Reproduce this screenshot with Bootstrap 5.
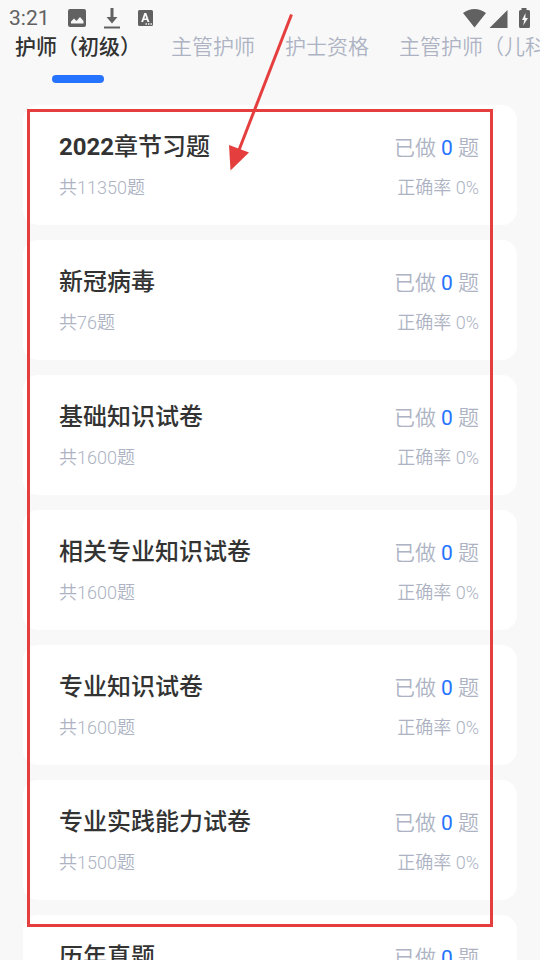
<!DOCTYPE html>
<html lang="zh-CN">
<head>
<meta charset="utf-8">
<meta name="viewport" content="width=device-width, initial-scale=1">
<title>护师题库</title>
<link href="https://cdn.jsdelivr.net/npm/bootstrap@5.3.0/dist/css/bootstrap.min.css" rel="stylesheet">
<style>
  body { background: #f8f8f8; color: #333; font-family: Roboto, "Noto Sans CJK SC", sans-serif; }
  .status-bar { height: 34px; padding: 2px 9px 0; color: #616161; font-size: 21px; line-height: 34px; }
  .status-bar svg { display: block; fill: #616161; }
  .status-left { gap: 18px; }
  .exam-tabs { gap: 30px; padding: 0 15px; height: 71px; }
  .exam-tabs .tab-btn { padding: 0; border: 0; background: none; color: #adb3c3; font-size: 21px; line-height: 26px; font-weight: 350; }
  .exam-tabs .tab-btn.active { color: #333; font-weight: 500; }
  .tab-btn.active::after { content: ""; display: block; width: 52px; height: 8px; margin: 15px auto 0; border-radius: 4px; background: #2673ff; }
  .paper-list { gap: 15px; padding: 0 23px; }
  .paper { height: 120px; padding: 24px 38px 0 36px; border: 0; border-radius: 15px; background: #fff; color: #adb3c3; font-weight: 350; }
  .paper:hover { color: #adb3c3; }
  .paper-title { margin: 0; color: #333; font-size: 24px; line-height: 36px; font-weight: 500; }
  .done { font-size: 21px; line-height: 36px; padding-top: 1px; }
  .done b { color: #2673ff; font-weight: 400; }
  .sub { font-size: 18px; line-height: 24px; padding-top: 11px; }
  .right .sub { padding-top: 10px; }
  .frame { top: 109px; left: 27px; right: 47px; height: 818px; border: 3px solid #e53e3e; }
  .arrow { top: 12px; left: 226px; }
</style>
</head>
<body>
<div class="vh-100 overflow-hidden d-flex flex-column position-relative">
  <header class="status-bar d-flex justify-content-between align-items-center flex-shrink-0">
    <div class="status-left d-flex align-items-center">
      <span>3:21</span>
      <svg width="18" height="18" viewBox="0 0 18 18" aria-hidden="true"><path fill-rule="evenodd" d="M2 0h14a2 2 0 0 1 2 2v14a2 2 0 0 1-2 2H2a2 2 0 0 1-2-2V2a2 2 0 0 1 2-2zM3 14.500h12.500v-2.500L12 8l-3.500 4L6 9.500l-3 3z"/></svg>
      <svg width="16" height="21" viewBox="0 0 16 21" aria-hidden="true"><path d="M6.500 0h3v9h4L8 15.500 2.500 9h4zM0 18.500h16v2H0z"/></svg>
      <svg width="15" height="17" viewBox="0 0 15 17" aria-hidden="true"><path fill-rule="evenodd" d="M1.500 0h12A1.500 1.500 0 0 1 15 1.500v13a1.500 1.500 0 0 1-1.500 1.500h-12A1.500 1.500 0 0 1 0 14.500v-13A1.500 1.500 0 0 1 1.500 0zM6.300 3L3.200 12h2l.6-1.900h3l.6 1.900h2L8.300 3zM7.300 5.400l.9 3.100H6.400zM7.500 13.300v1.400h1.400v-1.400zm2.500 0v1.400h1.400v-1.400zm2.500 0v1.400h1.400v-1.400z"/></svg>
    </div>
    <div class="d-flex align-items-center">
      <svg width="68" height="20" viewBox="0 0 68 20" aria-hidden="true"><path d="M0 5Q11.500-3 23 5L11.500 19.500zM44.500 2v18h-18zM58.500 0h5v2h2a1.500 1.500 0 0 1 1.500 1.500v15a1.500 1.500 0 0 1-1.500 1.500h-8a1.500 1.500 0 0 1-1.500-1.500v-15A1.500 1.500 0 0 1 57.500 2h1z"/><path fill="#f8f8f8" d="M62.500 5l-3.500 7h2.200l-1 5.500 4.800-7.500h-2.600z"/></svg>
    </div>
  </header>
  <nav class="exam-tabs d-flex align-items-start overflow-hidden flex-shrink-0 text-nowrap" aria-label="考试类别">
    <button type="button" class="tab-btn flex-shrink-0 active">护师（初级）</button>
    <button type="button" class="tab-btn flex-shrink-0">主管护师</button>
    <button type="button" class="tab-btn flex-shrink-0">护士资格</button>
    <button type="button" class="tab-btn flex-shrink-0">主管护师（儿科）</button>
  </nav>
  <main class="paper-list d-flex flex-column">
    <a href="#" class="paper flex-shrink-0 d-flex justify-content-between text-decoration-none"><div><h2 class="paper-title"><span class="fw-bold">2022</span>章节习题</h2><div class="sub">共11350题</div></div><div class="right text-end"><div class="done">已做 <b>0</b> 题</div><div class="sub">正确率 0%</div></div></a>
    <a href="#" class="paper flex-shrink-0 d-flex justify-content-between text-decoration-none"><div><h2 class="paper-title">新冠病毒</h2><div class="sub">共76题</div></div><div class="right text-end"><div class="done">已做 <b>0</b> 题</div><div class="sub">正确率 0%</div></div></a>
    <a href="#" class="paper flex-shrink-0 d-flex justify-content-between text-decoration-none"><div><h2 class="paper-title">基础知识试卷</h2><div class="sub">共1600题</div></div><div class="right text-end"><div class="done">已做 <b>0</b> 题</div><div class="sub">正确率 0%</div></div></a>
    <a href="#" class="paper flex-shrink-0 d-flex justify-content-between text-decoration-none"><div><h2 class="paper-title">相关专业知识试卷</h2><div class="sub">共1600题</div></div><div class="right text-end"><div class="done">已做 <b>0</b> 题</div><div class="sub">正确率 0%</div></div></a>
    <a href="#" class="paper flex-shrink-0 d-flex justify-content-between text-decoration-none"><div><h2 class="paper-title">专业知识试卷</h2><div class="sub">共1600题</div></div><div class="right text-end"><div class="done">已做 <b>0</b> 题</div><div class="sub">正确率 0%</div></div></a>
    <a href="#" class="paper flex-shrink-0 d-flex justify-content-between text-decoration-none"><div><h2 class="paper-title">专业实践能力试卷</h2><div class="sub">共1500题</div></div><div class="right text-end"><div class="done">已做 <b>0</b> 题</div><div class="sub">正确率 0%</div></div></a>
    <a href="#" class="paper flex-shrink-0 d-flex justify-content-between text-decoration-none"><div><h2 class="paper-title">历年真题</h2></div><div class="right text-end"><div class="done">已做 <b>0</b> 题</div></div></a>
  </main>
  <div class="frame position-absolute pe-none" aria-hidden="true"></div>
  <svg class="arrow position-absolute pe-none" width="70" height="162" viewBox="226 12 70 162" aria-hidden="true"><path d="M291.500 14.500L239 150" stroke="#e53e3e" stroke-width="3" fill="none"/><path d="M229 145l20 7.500-18.500 18z" fill="#e53e3e"/></svg>
</div>
<script src="https://cdn.jsdelivr.net/npm/bootstrap@5.3.0/dist/js/bootstrap.bundle.min.js"></script>
</body>
</html>
